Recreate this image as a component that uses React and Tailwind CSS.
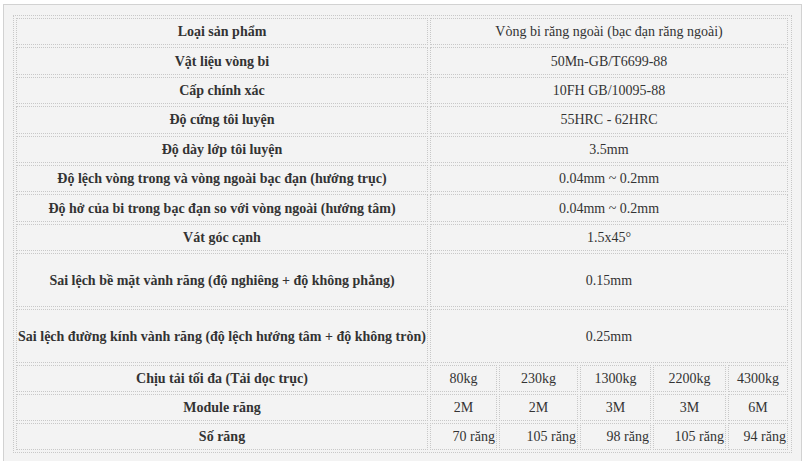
import React from 'react';

const specs = [
  ['Loại sản phẩm', 'Vòng bi răng ngoài (bạc đạn răng ngoài)'],
  ['Vật liệu vòng bi', '50Mn-GB/T6699-88'],
  ['Cấp chính xác', '10FH GB/10095-88'],
  ['Độ cứng tôi luyện', '55HRC - 62HRC'],
  ['Độ dày lớp tôi luyện', '3.5mm'],
  ['Độ lệch vòng trong và vòng ngoài bạc đạn (hướng trục)', '0.04mm ~ 0.2mm'],
  ['Độ hở của bi trong bạc đạn so với vòng ngoài (hướng tâm)', '0.04mm ~ 0.2mm'],
  ['Vát góc cạnh', '1.5x45°'],
  ['Sai lệch bề mặt vành răng (độ nghiêng + độ không phẳng)', '0.15mm', true],
  ['Sai lệch đường kính vành răng (độ lệch hướng tâm + độ không tròn)', '0.25mm', true],
];

const models = [
  ['Chịu tải tối đa (Tải dọc trục)', ['80kg', '230kg', '1300kg', '2200kg', '4300kg']],
  ['Module răng', ['2M', '2M', '3M', '3M', '6M']],
];

const teeth = ['70 răng', '105 răng', '98 răng', '105 răng', '94 răng'];

const cell = 'flex items-center justify-center border border-dotted border-[#c8c8c8] text-center';

export default function App() {
  return (
    <div className="bg-white min-h-screen pt-[4px] pl-[3px]">
      <div
        className="w-[799px] border border-[#d2d2d2] bg-[#f3f3f3] px-[9px] pt-[10px] pb-[9px] text-[14px] text-[#333]"
        style={{ fontFamily: '"Liberation Serif", "Times New Roman", serif' }}
      >
        <div className="grid grid-cols-[412px_67px_79px_71px_73px_60px] gap-[2px] border border-dotted border-[#c8c8c8] p-[2px]">
          {specs.map(([label, value, tall]) => (
            <React.Fragment key={label}>
              <div className={`${cell} font-bold ${tall ? 'h-[54px]' : 'h-[27.4px]'}`}>{label}</div>
              <div className={`${cell} col-span-5 ${tall ? 'h-[54px]' : 'h-[27.4px]'}`}>{value}</div>
            </React.Fragment>
          ))}
          {models.map(([label, values]) => (
            <React.Fragment key={label}>
              <div className={`${cell} h-[27px] font-bold`}>{label}</div>
              {values.map((v, i) => (
                <div key={i} className={`${cell} h-[27px]`}>{v}</div>
              ))}
            </React.Fragment>
          ))}
          <div className={`${cell} h-[27px] font-bold`}>Số răng</div>
          {teeth.map((t, i) => (
            <div
              key={i}
              className="flex h-[27px] items-center justify-end border border-dotted border-[#c8c8c8] pr-[1px] whitespace-nowrap"
            >
              {t}
            </div>
          ))}
        </div>
      </div>
    </div>
  );
}
